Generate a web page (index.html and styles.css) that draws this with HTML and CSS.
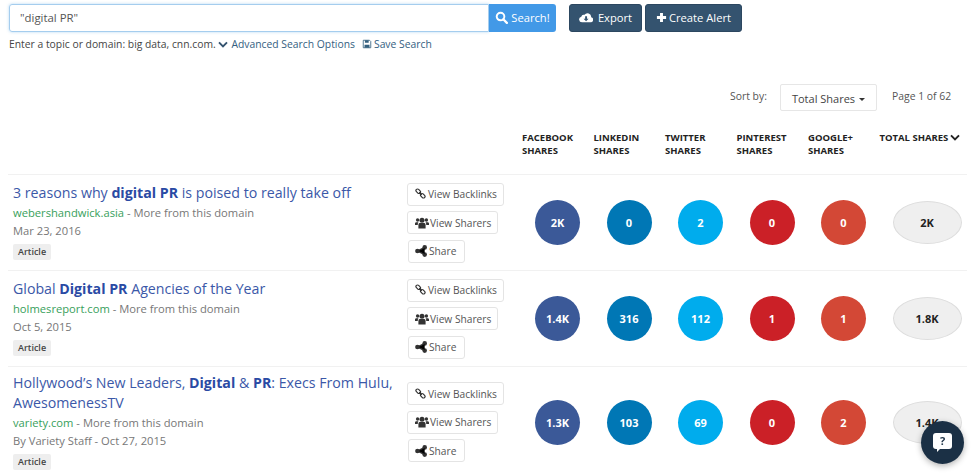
FILE: index.html
```html
<!DOCTYPE html>
<html lang="en">
<head>
<meta charset="utf-8">
<title>Content search</title>
<link rel="stylesheet" href="styles.css">
</head>
<body>
<svg class="sprite" aria-hidden="true">
  <symbol id="i-search" viewBox="0 0 16 16"><circle cx="6.8" cy="6.8" r="4.7" fill="none" stroke="currentColor" stroke-width="2.4"/><path d="M10.2 10.2L14.6 14.6" stroke="currentColor" stroke-width="2.8" stroke-linecap="round"/></symbol>
  <symbol id="i-cloud" viewBox="0 0 16 12"><path fill="currentColor" d="M3.4 11.5A3.3 3.3 0 0 1 2.6 5 3 3 0 0 1 6.3 2.9 4.2 4.2 0 0 1 13.9 5.6 3 3 0 0 1 12.9 11.5Z"/><path fill="#34536f" d="M7 4.5H9.2V7.3H11L8.1 10.2 5.2 7.3H7Z"/></symbol>
  <symbol id="i-plus" viewBox="0 0 12 12"><path fill="currentColor" d="M4.4 1H7.6V4.4H11V7.6H7.6V11H4.4V7.6H1V4.4H4.4Z"/></symbol>
  <symbol id="i-chevron" viewBox="0 0 12 8"><path fill="none" stroke="currentColor" stroke-width="2.3" d="M1.2 1.4L6 6.2 10.8 1.4"/></symbol>
  <symbol id="i-save" viewBox="0 0 12 12"><path fill="none" stroke="currentColor" d="M1.5 1.5H9L10.5 3V10.5H1.5Z"/><path fill="currentColor" d="M3.5 1.5H8V4.5H3.5ZM3 7H9V10.5H3Z"/></symbol>
  <symbol id="i-link" viewBox="0 0 12 12"><g fill="none" stroke="currentColor" stroke-width="1.3"><rect x="-2.6" y="-1.7" width="5.6" height="3.4" rx="1.7" transform="translate(3.4 3.4) rotate(45)"/><rect x="-3" y="-1.7" width="5.6" height="3.4" rx="1.7" transform="translate(8.6 8.6) rotate(45)"/><path d="M4.6 4.6L7.4 7.4"/></g></symbol>
  <symbol id="i-users" viewBox="0 0 14 12"><g fill="currentColor"><circle cx="2.6" cy="3" r="1.7"/><circle cx="11.4" cy="3" r="1.7"/><circle cx="7" cy="3.2" r="2.5"/><path d="M0 8V6.6C0 5.6.8 5.2 1.6 5.2H3.4C2.8 6 2.8 7 2.8 8ZM14 8V6.6C14 5.6 13.2 5.2 12.4 5.2H10.6C11.2 6 11.2 7 11.2 8Z"/><path d="M3.4 11.6V8C3.4 6.6 4.2 6 5 6H9C9.8 6 10.6 6.6 10.6 8V11.6Z"/></g></symbol>
  <symbol id="i-share" viewBox="0 0 12 12"><g fill="currentColor"><circle cx="9.7" cy="2.4" r="2.3"/><circle cx="9.7" cy="9.6" r="2.3"/><circle cx="2.4" cy="6" r="2.3"/></g><path stroke="currentColor" stroke-width="1.3" d="M9.7 2.4L2.4 6 9.7 9.6"/></symbol>
</svg>

<header class="search-bar">
  <div class="search-group">
    <div class="search-input">"digital PR"</div>
    <button class="btn-search"><svg class="icon ic-13"><use href="#i-search"/></svg>Search!</button>
  </div>
  <button class="btn-dark btn-export"><svg class="icon ic-export"><use href="#i-cloud"/></svg>Export</button>
  <button class="btn-dark btn-alert"><svg class="icon ic-plus"><use href="#i-plus"/></svg>Create Alert</button>
</header>

<p class="hint">Enter a topic or domain: big data, cnn.com. <a class="hint-link"><svg class="icon ic-chev"><use href="#i-chevron"/></svg>Advanced Search Options</a><a class="hint-link save"><svg class="icon ic-10"><use href="#i-save"/></svg>Save Search</a></p>

<div class="sort-row">
  <span class="sort-label">Sort by:</span>
  <div class="sort-select">Total Shares<span class="caret"></span></div>
  <span class="page-count">Page 1 of 62</span>
</div>

<div class="columns">
  <div class="col-head">Facebook<br>Shares</div>
  <div class="col-head">LinkedIn<br>Shares</div>
  <div class="col-head">Twitter<br>Shares</div>
  <div class="col-head">Pinterest<br>Shares</div>
  <div class="col-head">Google+<br>Shares</div>
  <div class="col-head col-total">Total Shares <svg class="icon ic-chev-dark"><use href="#i-chevron"/></svg></div>
</div>

<main class="results">
  <article class="row">
    <div class="info">
      <h3 class="title">3 reasons why <b>digital PR</b> is poised to really take off</h3>
      <p class="meta"><span class="domain">webershandwick.asia</span> - More from this domain</p>
      <p class="meta">Mar 23, 2016</p>
      <span class="tag">Article</span>
    </div>
    <div class="actions">
      <button class="act"><svg class="icon ic-11"><use href="#i-link"/></svg>View Backlinks</button>
      <button class="act"><svg class="icon ic-users"><use href="#i-users"/></svg>View Sharers</button>
      <button class="act act-share"><svg class="icon ic-share"><use href="#i-share"/></svg>Share</button>
    </div>
    <div class="stats">
      <div class="cell"><span class="dot fb">2K</span></div>
      <div class="cell"><span class="dot li">0</span></div>
      <div class="cell"><span class="dot tw">2</span></div>
      <div class="cell"><span class="dot pi">0</span></div>
      <div class="cell"><span class="dot gp">0</span></div>
      <div class="cell"><span class="total">2K</span></div>
    </div>
  </article>
  <article class="row">
    <div class="info">
      <h3 class="title">Global <b>Digital PR</b> Agencies of the Year</h3>
      <p class="meta"><span class="domain">holmesreport.com</span> - More from this domain</p>
      <p class="meta">Oct 5, 2015</p>
      <span class="tag">Article</span>
    </div>
    <div class="actions">
      <button class="act"><svg class="icon ic-11"><use href="#i-link"/></svg>View Backlinks</button>
      <button class="act"><svg class="icon ic-users"><use href="#i-users"/></svg>View Sharers</button>
      <button class="act act-share"><svg class="icon ic-share"><use href="#i-share"/></svg>Share</button>
    </div>
    <div class="stats">
      <div class="cell"><span class="dot fb">1.4K</span></div>
      <div class="cell"><span class="dot li">316</span></div>
      <div class="cell"><span class="dot tw">112</span></div>
      <div class="cell"><span class="dot pi">1</span></div>
      <div class="cell"><span class="dot gp">1</span></div>
      <div class="cell"><span class="total">1.8K</span></div>
    </div>
  </article>
  <article class="row row-tall">
    <div class="info">
      <h3 class="title">Hollywood’s New Leaders, <b>Digital</b> &amp; <b>PR</b>: Execs From Hulu, AwesomenessTV</h3>
      <p class="meta"><span class="domain">variety.com</span> - More from this domain</p>
      <p class="meta">By Variety Staff - Oct 27, 2015</p>
      <span class="tag">Article</span>
    </div>
    <div class="actions">
      <button class="act"><svg class="icon ic-11"><use href="#i-link"/></svg>View Backlinks</button>
      <button class="act"><svg class="icon ic-users"><use href="#i-users"/></svg>View Sharers</button>
      <button class="act act-share"><svg class="icon ic-share"><use href="#i-share"/></svg>Share</button>
    </div>
    <div class="stats">
      <div class="cell"><span class="dot fb">1.3K</span></div>
      <div class="cell"><span class="dot li">103</span></div>
      <div class="cell"><span class="dot tw">69</span></div>
      <div class="cell"><span class="dot pi">0</span></div>
      <div class="cell"><span class="dot gp">2</span></div>
      <div class="cell"><span class="total">1.4K</span></div>
    </div>
  </article>
</main>

<button class="chat" aria-label="Help">
  <span class="chat-bubble">?</span>
</button>
</body>
</html>
```

FILE: styles.css
```css
* { box-sizing: border-box; }
html, body { height: 473px; overflow: hidden; }
body {
  margin: 0;
  padding: 4px 8px 0 9px;
  background: #fff;
  color: #555;
  font-family: "Open Sans", "Liberation Sans", sans-serif;
  font-size: 11px;
}
.sprite { display: none; }
.icon { display: inline-block; vertical-align: -1px; }
.ic-13 { width: 13px; height: 13px; margin-right: 3px; vertical-align: -2px; }
.ic-10 { width: 10px; height: 10px; margin-right: 3px; }
.ic-plus { width: 11px; height: 11px; margin-right: 2px; vertical-align: -1px; }
.ic-11 { width: 11px; height: 11px; margin-right: 2px; vertical-align: -1px; }
.ic-share { width: 12px; height: 12px; margin-right: 2px; vertical-align: -2px; }
.ic-users { width: 14px; height: 12px; margin-right: 1px; vertical-align: -2px; }
.ic-export { width: 14px; height: 11px; margin-right: 5px; vertical-align: -1px; }
.ic-chev { width: 10px; height: 7px; margin-right: 3px; vertical-align: 0; color: #34536f; }
.ic-chev-dark { width: 10px; height: 7px; margin-left: -1px; vertical-align: 0; color: #222; }

button { font-family: inherit; cursor: pointer; }

.search-bar { display: flex; align-items: stretch; height: 28px; }
.search-group { display: flex; width: 547px; margin-right: 13px; }
.search-input {
  flex: 1;
  border: 1px solid #a5cdee;
  border-radius: 3px 0 0 3px;
  padding: 0 10px;
  line-height: 26px;
  font-size: 11.4px;
  color: #555;
  box-shadow: 0 0 3px rgba(102, 175, 233, .5);
}
.btn-search {
  width: 67px;
  padding: 0 0 2px;
  border: 0;
  border-radius: 0 3px 3px 0;
  background: #4299e7;
  color: #fff;
  font-size: 11.2px;
}
.btn-dark {
  padding: 0 0 1px;
  border: 1px solid #2c4760;
  border-radius: 3px;
  background: #34536f;
  color: #fff;
  font-size: 11.2px;
}
.btn-export { width: 73px; margin-right: 3px; }
.btn-alert { width: 97px; }

.hint { margin: 5px 0 0; line-height: 15px; color: #444; font-size: 10.35px; }
.hint-link { color: #34607f; }
.hint-link.save { margin-left: 7px; }
.hint-link.save .icon { margin-right: 2px; }

.sort-row { display: flex; align-items: flex-start; margin-top: 32px; height: 27px; padding-left: 721px; }
.sort-label { width: 50px; margin-top: 5px; font-size: 10.4px; line-height: 14px; }
.sort-select {
  width: 97px;
  height: 27px;
  border: 1px solid #e6e6e6;
  border-radius: 2px;
  text-align: center;
  line-height: 27px;
  font-size: 11px;
  color: #444;
}
.caret {
  display: inline-block;
  margin-left: 4px;
  vertical-align: 2px;
  border-top: 3px solid #333;
  border-left: 3px solid transparent;
  border-right: 3px solid transparent;
}
.page-count { margin: 5px 0 0 15px; font-size: 10.4px; line-height: 14px; white-space: nowrap; }

.columns {
  display: grid;
  grid-template-columns: repeat(6, 71.5px);
  margin: 20px 0 0 513px;
  height: 30px;
}
.col-head {
  font-size: 9.5px;
  font-weight: 700;
  line-height: 13px;
  color: #222;
  text-transform: uppercase;
  white-space: nowrap;
}

.results { margin-top: 13px; margin-left: -1px; }
.row {
  display: flex;
  align-items: center;
  width: 959px;
  min-height: 96px;
  border-top: 1px solid #f1f1f1;
}
.row-tall { min-height: 111px; }
.info { width: 399px; padding: 0 5px 2px 5px; flex: none; }
.title {
  margin: 0 0 1px;
  font-size: 14.2px;
  font-weight: 400;
  line-height: 20px;
  color: #3b58a8;
}
.title b { font-weight: 700; color: #2a4aa4; }
.meta { margin: 0; font-size: 11.2px; line-height: 18px; color: #777; }
.domain { color: #37a05b; }
.tag {
  display: inline-block;
  margin-top: 4px;
  padding: 0 5px;
  height: 16px;
  line-height: 16px;
  border-radius: 2px;
  background: #eee;
  color: #444;
  font-size: 9px;
  font-weight: 600;
}
.actions {
  flex: none;
  width: 115px;
  display: flex;
  flex-direction: column;
  align-items: flex-start;
  gap: 5.5px;
}
.act {
  height: 23px;
  padding: 0 6px 0 7px;
  border: 1px solid #e4e4e4;
  border-radius: 3px;
  background: #fff;
  color: #555;
  font-size: 10.2px;
  white-space: nowrap;
}
.act .icon { color: #333; }
.act-share { margin-left: 1px; padding: 0 8px 0 6px; }
.stats { display: grid; grid-template-columns: repeat(6, 71.5px); flex: none; }
.cell { padding-left: 13px; }
.dot, .total {
  display: flex;
  align-items: center;
  justify-content: center;
  font-size: 11px;
  font-weight: 700;
}
.dot {
  width: 45px;
  height: 45px;
  border-radius: 50%;
  color: #fff;
}
.total {
  width: 69px;
  height: 43px;
  margin-top: 1px;
  border-radius: 50%;
  border: 1px solid #ddd;
  background: #efefef;
  color: #222;
}
.fb { background: #3b5998; }
.li { background: #0077b5; }
.tw { background: #00aced; }
.pi { background: #cb2027; }
.gp { background: #d34836; }

.chat {
  position: fixed;
  left: 921px;
  top: 421px;
  width: 43px;
  height: 43px;
  padding: 0;
  border: 0;
  border-radius: 50%;
  background: #1b3045;
  box-shadow: 0 2px 6px rgba(0, 0, 0, .3);
  display: flex;
  align-items: center;
  justify-content: center;
}
.chat-bubble {
  position: relative;
  display: block;
  width: 19px;
  height: 16px;
  margin-top: -3px;
  border-radius: 3px;
  background: #fff;
  color: #1b3045;
  font-size: 11px;
  font-weight: 700;
  line-height: 16px;
  text-align: center;
}
.chat-bubble::after {
  content: "";
  position: absolute;
  left: 4px;
  bottom: -3px;
  border-top: 4px solid #fff;
  border-right: 4px solid transparent;
}
```
